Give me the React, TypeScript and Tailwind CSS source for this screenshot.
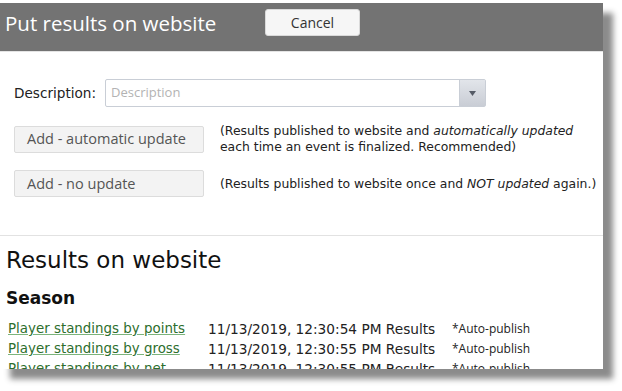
import React from "react";

const body = { fontFamily: '"DejaVu Sans", Verdana, sans-serif' };
const ui = { fontFamily: '"Open Sans", "Segoe UI", sans-serif' };

const rows = [
  { name: "Player standings by points", when: "11/13/2019, 12:30:54 PM Results" },
  { name: "Player standings by gross", when: "11/13/2019, 12:30:55 PM Results" },
  { name: "Player standings by net", when: "11/13/2019, 12:30:55 PM Results" },
];

export default function App() {
  return (
    <div className="w-[622px] h-[391px] bg-white overflow-hidden pt-[3px]">
      <div className="w-[603px] h-[366px] bg-white overflow-hidden shadow-[10px_10px_6px_#8b8b8b] flex flex-col">
        {/* Header */}
        <div className="h-[49px] shrink-0 bg-[#737373] flex items-start pt-[6px] border-b border-[#e4e4e4]">
          <h1 className="w-[265px] pl-[5px] pt-[2px] text-[20.5px] leading-[24px] text-white" style={ui}>
            Put results on website
          </h1>
          <button
            type="button"
            className="w-[95px] h-[27px] rounded-[3px] bg-[#f6f6f6] border border-[#dadada] text-[14px] text-[#333]"
            style={ui}
          >
            Cancel
          </button>
        </div>

        {/* Form */}
        <div className="pl-[14px] pt-[27px]" style={body}>
          <div className="flex items-center h-[28px]">
            <label className="w-[91px] text-[13.6px] text-[#222]">Description:</label>
            <div className="w-[381px] h-[28px] flex border border-[#c9ced6] rounded-[2px]">
              <input
                placeholder="Description"
                className="flex-1 min-w-0 px-[5px] text-[13px] text-[#333] placeholder:text-[#b3b3b3] outline-none"
                style={ui}
              />
              <div className="w-[26px] border-l border-[#c9ced6] bg-gradient-to-b from-[#e2e5ea] to-[#c9cdd5] flex items-center justify-center">
                <svg width="7" height="5" viewBox="0 0 7 5">
                  <path d="M0 0H7L3.5 5Z" fill="#555b66" />
                </svg>
              </div>
            </div>
          </div>

          <div className="flex items-center mt-[16px]">
            <button
              type="button"
              className="w-[190px] h-[27px] shrink-0 text-left pl-[12px] bg-[#f3f3f3] border border-[#dcdcdc] rounded-[2px] text-[14.5px] text-[#555]"
              style={ui}
            >
              Add - automatic update
            </button>
            <p className="ml-[16px] text-[12.4px] leading-[16px] text-[#222] whitespace-nowrap">
              (Results published to website and <i>automatically updated</i>
              <br />
              each time an event is finalized. Recommended)
            </p>
          </div>

          <div className="flex items-center mt-[15px]">
            <button
              type="button"
              className="w-[190px] h-[27px] shrink-0 text-left pl-[12px] bg-[#f3f3f3] border border-[#dcdcdc] rounded-[2px] text-[14.5px] text-[#555]"
              style={ui}
            >
              Add - no update
            </button>
            <p className="ml-[16px] text-[12.4px] leading-[16px] text-[#222] whitespace-nowrap">
              (Results published to website once and <i>NOT updated</i> again.)
            </p>
          </div>
        </div>

        <div className="mt-[38px] border-t border-[#e2e2e2]" />

        {/* Results */}
        <div className="pl-[6px] pt-[9px]" style={body}>
          <h2 className="text-[23px] leading-[30px] text-[#111]">Results on website</h2>
          <h3 className="mt-[13px] text-[17px] leading-[20px] font-bold text-[#111]">Season</h3>
          <div className="mt-[11px]">
            {rows.map((r) => (
              <div key={r.name} className="flex h-[20px] items-center text-[13.7px] text-[#222] whitespace-nowrap">
                <a
                  href="#"
                  className="w-[202px] pl-[2px] text-[13.4px] text-[#2d6e2d] underline decoration-[#7cb47c]"
                >
                  {r.name}
                </a>
                <span className="w-[244px]">{r.when}</span>
                <span className="text-[12px]" style={ui}>
                  *Auto-publish
                </span>
              </div>
            ))}
          </div>
        </div>
      </div>
    </div>
  );
}
